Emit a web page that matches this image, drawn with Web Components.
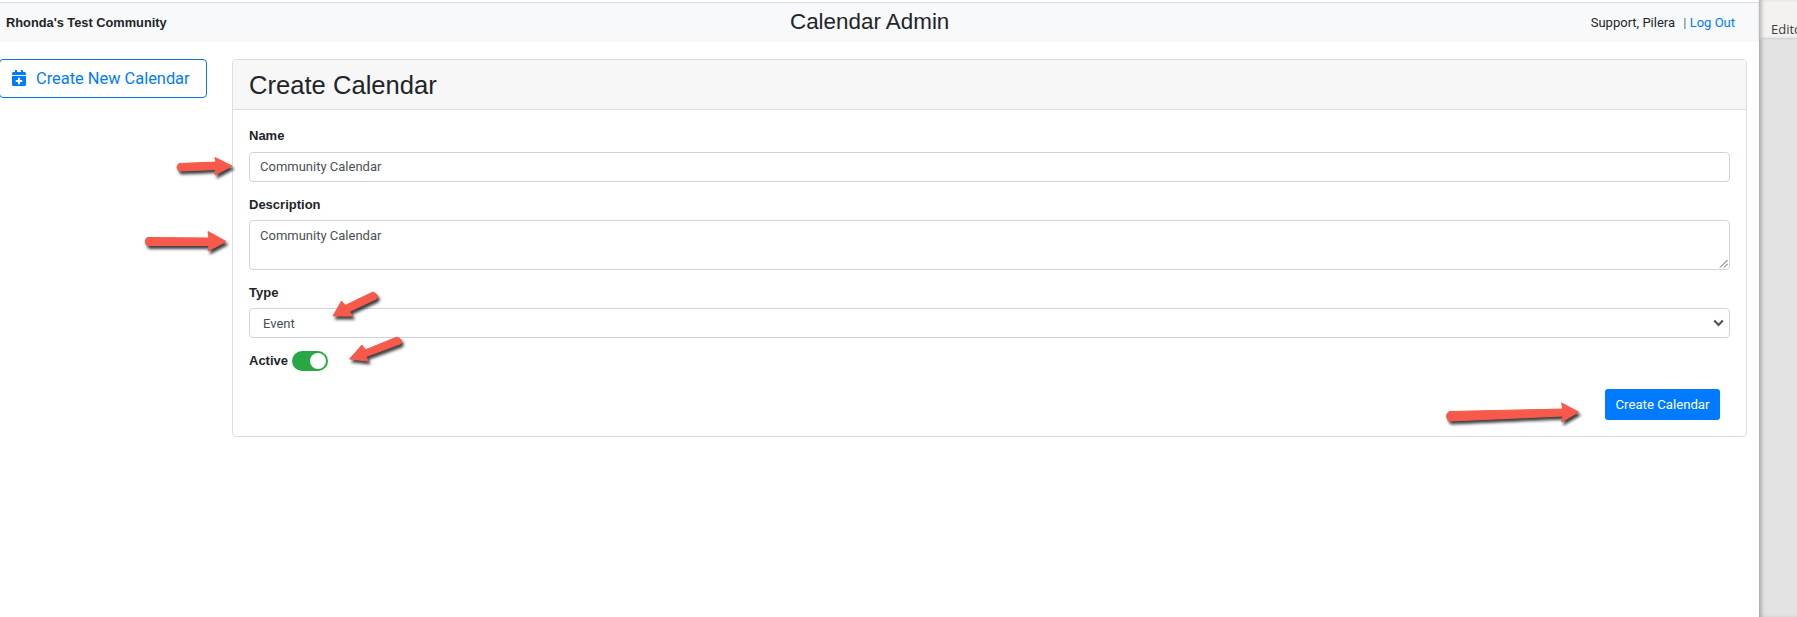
<!DOCTYPE html>
<html lang="en">
<head>
<meta charset="utf-8">
<title>Calendar Admin</title>
<style>
html,body{margin:0;padding:0;background:#fff;overflow:hidden;height:617px}
body{font-family:Roboto,"Liberation Sans",sans-serif;color:#212529;font-size:13.5px}
</style>
</head>
<body>
<app-shell>
  <top-nav>
    <span slot="brand">Rhonda's Test Community</span>
    <span slot="title">Calendar Admin</span>
    <span slot="user">Support, Pilera</span>
    <span slot="logout">Log Out</span>
  </top-nav>
  <side-button slot="side">Create New Calendar</side-button>
  <form-card slot="main" heading="Create Calendar">
    <form-field label="Name" style="margin-bottom:12px"><text-box>Community Calendar</text-box></form-field>
    <form-field label="Description" style="margin-bottom:12px;--label-gap:5px"><text-box multiline>Community Calendar</text-box></form-field>
    <form-field label="Type" style="margin-bottom:12px;--label-gap:5px"><select-box>Event</select-box></form-field>
    <toggle-row label="Active"></toggle-row>
    <action-button slot="actions">Create Calendar</action-button>
  </form-card>
  <editor-pane slot="pane">Editor</editor-pane>
  <arrow-overlay slot="overlay"></arrow-overlay>
</app-shell>
<script>
function def(name, css, html, init){
  customElements.define(name, class extends HTMLElement{
    constructor(){
      super();
      const r=this.attachShadow({mode:'open'});
      r.innerHTML='<style>'+css+'</style>'+html;
    }
    connectedCallback(){ if(init) init(this, this.shadowRoot); }
  });
}
def('app-shell',`
  :host{display:flex;width:1797px;height:617px;position:relative;overflow:hidden}
  .page{flex:0 0 1759px;width:1759px;background:#fff}
  .content{display:flex;align-items:flex-start;padding-top:17px}
  .side{flex:0 0 232px;margin-left:-1px}
  .main{flex:0 0 1515px;margin-left:1px}
`,`<div class="page"><slot></slot>
   <div class="content"><div class="side"><slot name="side"></slot></div><div class="main"><slot name="main"></slot></div></div>
 </div><slot name="pane"></slot><slot name="overlay"></slot>`);
def('top-nav',`
  :host{display:grid;grid-template-columns:790px 1fr auto;align-items:center;height:39px;margin-top:2px;border-top:1px solid #dcdde0;background:#f8f9fa;padding-right:24px;box-sizing:content-box}
  .brand{padding-left:6px;font:700 12.8px "Liberation Sans",Arial,sans-serif}
  .title{font:22.4px/1 "Liberation Sans",Arial,sans-serif}
  .user{font-size:13px}
  .sep{color:#5a6b80;margin-left:5px}
  .out{color:#007bff}
`,`<div class="brand"><slot name="brand"></slot></div>
   <div class="title"><slot name="title"></slot></div>
   <div class="user"><slot name="user"></slot> <span class="sep">|</span> <span class="out"><slot name="logout"></slot></span></div>`);
def('side-button',`
  :host{display:flex;align-items:center;gap:9px;box-sizing:border-box;width:208px;height:39px;border:1px solid #0f76e6;border-radius:4px;padding:0 0 1px 12px;color:#007bff;font-size:16.4px;background:#fff}
  svg{width:14px;height:16px;fill:#007bff;flex:none;margin-right:1px}
`,`<svg viewBox="0 0 448 512"><path d="M436 160H12c-6.6 0-12-5.4-12-12v-36c0-26.5 21.5-48 48-48h48V12c0-6.6 5.4-12 12-12h40c6.6 0 12 5.4 12 12v52h128V12c0-6.6 5.4-12 12-12h40c6.6 0 12 5.4 12 12v52h48c26.5 0 48 21.5 48 48v36c0 6.6-5.4 12-12 12zM12 192h424c6.6 0 12 5.4 12 12v260c0 26.5-21.5 48-48 48H48c-26.5 0-48-21.5-48-48V204c0-6.6 5.4-12 12-12zm316 140c0-6.6-5.4-12-12-12h-60v-60c0-6.6-5.4-12-12-12h-40c-6.6 0-12 5.4-12 12v60h-60c-6.6 0-12 5.4-12 12v40c0 6.6 5.4 12 12 12h60v60c0 6.6 5.4 12 12 12h40c6.6 0 12-5.4 12-12v-60h60c6.6 0 12-5.4 12-12v-40z"/></svg><span><slot></slot></span>`);
def('form-card',`
  :host{display:block;box-sizing:border-box;height:378px;border:1px solid #dedfe0;border-radius:4px;background:#fff;overflow:hidden}
  header{box-sizing:border-box;height:50px;background:#f7f7f7;border-bottom:1px solid #dedfe0;padding:2px 0 0 16px;display:flex;align-items:center;font:25.6px/1 "Liberation Sans",Arial,sans-serif}
  .body{padding:15px 16px 0}
  .actions{display:flex;justify-content:flex-end;padding-right:10px;margin-top:18px}
`,`<header></header><div class="body"><slot></slot><div class="actions"><slot name="actions"></slot></div></div>`,
(h,r)=>{r.querySelector('header').textContent=h.getAttribute('heading');});
def('form-field',`
  :host{display:block}
  label{display:block;font:700 13px/21px "Liberation Sans",Arial,sans-serif;margin-bottom:var(--label-gap,6px)}
`,`<label></label><slot></slot>`,(h,r)=>{r.querySelector('label').textContent=h.getAttribute('label');});
def('text-box',`
  :host{display:block;box-sizing:border-box;height:30px;border:1px solid #ced4da;border-radius:4px;background:#fff;color:#495057;font-size:13px;line-height:28px;padding:0 10px;position:relative}
  :host([multiline]){height:50px;line-height:26px;padding-top:2px}
  svg{display:none;position:absolute;right:1px;bottom:1px;width:9px;height:9px}
  :host([multiline]) svg{display:block}
`,`<slot></slot><svg viewBox="0 0 9 9"><path d="M1 8.5 8.5 1M5 8.5 8.5 5" stroke="#555" stroke-width="1" fill="none"/></svg>`);
def('select-box',`
  :host{display:flex;align-items:center;justify-content:space-between;box-sizing:border-box;height:30px;border:1px solid #ced4da;border-radius:4px;background:#fff;color:#495057;font-size:13px;padding:0 5px 0 13px}
  svg{width:11px;height:8px}
`,`<span><slot></slot></span><svg viewBox="0 0 11 8"><path d="M1.2 1.5 5.5 6 9.8 1.5" fill="none" stroke="#4a5056" stroke-width="2"/></svg>`);
def('toggle-row',`
  :host{display:flex;align-items:center;gap:4px;height:21px}
  label{font:700 13px "Liberation Sans",Arial,sans-serif}
  .t{width:36px;height:20px;border-radius:10px;background:#28a745;display:flex;justify-content:flex-end;align-items:center;padding:2px 2px;box-sizing:border-box}
  .k{width:16px;height:16px;border-radius:50%;background:#fff}
`,`<label></label><div class="t"><div class="k"></div></div>`,(h,r)=>{r.querySelector('label').textContent=h.getAttribute('label');});
def('action-button',`
  :host{display:flex;align-items:center;justify-content:center;box-sizing:border-box;width:115px;height:31px;background:#007bff;border-radius:3px;color:#fff;font-size:13.2px}
`,`<slot></slot>`);
def('editor-pane',`
  :host{display:block;flex:0 0 38px;height:617px;background:#e3e3e3;position:relative;box-shadow:inset 4px 0 4px -2px #9c9c9c}
  .top{height:38px;background:#f3f2f1;box-shadow:inset 4px 0 4px -2px #a8a8a8, 0 1px 2px #cfcfcf;box-sizing:border-box;padding:22px 0 0 12px;font:13px/14px "Open Sans","Liberation Sans",sans-serif;color:#3b3a39;overflow:hidden;white-space:nowrap}
`,`<div class="top"><slot></slot></div>`);
def('arrow-overlay',`
  :host{display:block;position:absolute;left:0;top:0;width:1797px;height:617px;pointer-events:none}
  svg{display:block;filter:drop-shadow(2px 3px 1.5px rgba(0,0,0,.75))}
  path{fill:#f7594b;stroke:#f7594b;stroke-width:1;stroke-linejoin:round}
`,`<svg width="1797" height="617" viewBox="0 0 1797 617">
  <path d="M179 163.5 L216 162 L215 157.5 L232 166 L215 175 L215.5 169.5 L179 171 Q175 167 179 163.5Z"/>
  <path d="M147 237.5 L209 238 L208 231.5 L226 241.5 L208 251 L209 245.5 L147 245.5 Q143.5 241.5 147 237.5Z"/>
  <path d="M373 292 L345 305.5 L341.5 301 L333 316 L352.5 316 L349.5 311.5 L376 299 Q380 295 373 292Z"/>
  <path d="M397 337 L365 350 L362 345 L349.5 359 L368 361 L366 356.5 L400 344 Q404 340 397 337Z"/>
  <path d="M1449 411.5 L1563 409 L1561.5 403 L1578.5 412 L1561.5 422 L1563 416 L1449 421 Q1444 416 1449 411.5Z"/>
</svg>`);
</script>
</body>
</html>
